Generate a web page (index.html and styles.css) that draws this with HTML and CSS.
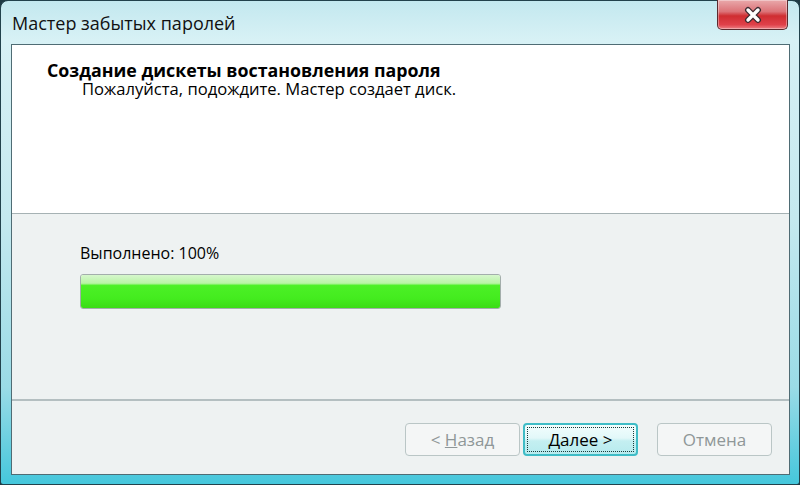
FILE: index.html
```html
<!DOCTYPE html>
<html lang="ru">
<head>
  <meta charset="UTF-8">
  <title>Мастер забытых паролей</title>
  <link rel="stylesheet" href="styles.css">
</head>
<body>
  <div class="window">
    <div class="titlebar">
      <span class="caption">Мастер забытых паролей</span>
      <button class="close" aria-label="Закрыть">
        <svg width="26" height="18" viewBox="0 0 26 18">
          <path d="M8 4 L18 14 M18 4 L8 14" stroke="#3b2a30" stroke-width="6" stroke-linecap="round"/>
          <path d="M8 4 L18 14 M18 4 L8 14" stroke="#fff" stroke-width="3.4" stroke-linecap="round"/>
        </svg>
      </button>
    </div>

    <div class="content">
      <div class="wizard-header">
        <h1>Создание дискеты востановления пароля</h1>
        <p>Пожалуйста, подождите. Мастер создает диск.</p>
      </div>

      <div class="wizard-body">
        <div class="status">Выполнено: 100%</div>
        <div class="progress">
          <div class="progress-fill" style="width: 100%"></div>
        </div>
      </div>

      <div class="wizard-footer">
        <button class="btn" disabled>&lt; <u>Н</u>азад</button>
        <button class="btn default"><span class="focus"><u>Д</u>алее &gt;</span></button>
        <button class="btn cancel" disabled>Отмена</button>
      </div>
    </div>
  </div>
</body>
</html>
```

FILE: styles.css
```css
body {
  margin: 0;
  padding: 0;
  background: #1e3a44;
  font-family: "Open Sans", "Noto Sans", sans-serif;
  color: #000;
}
.window {
  width: 800px;
  height: 485px;
  box-sizing: border-box;
  border: 1px solid #22424c;
  border-radius: 8px 8px 3px 3px;
  background: linear-gradient(to bottom, #c3e8ef 0%, #d7f1f5 8%, #c4e9ef 45%, #9adbe6 80%, #45c7dc 100%);
  display: flex;
  flex-direction: column;
  padding: 0 9px 9px 10px;
}
.titlebar {
  height: 43px;
  display: flex;
  justify-content: space-between;
  align-items: flex-start;
}
.caption {
  font-size: 18px;
  margin-top: 10px;
  margin-left: 1px;
  color: #111;
}
.close {
  width: 71px;
  height: 30px;
  margin-top: -1px;
  margin-right: 2px;
  border: 1px solid #5b2a2e;
  border-top: none;
  border-radius: 0 0 5px 5px;
  background: linear-gradient(to bottom, #e9a9ab 0%, #dc7378 40%, #cf2d31 55%, #e0414a 85%, #ec7f84 100%);
  box-shadow: inset 0 0 0 1px rgba(255, 255, 255, 0.35);
  display: flex;
  align-items: center;
  justify-content: center;
  padding: 0;
}
.content {
  flex: 1;
  border: 1px solid #4f6c74;
  background: #eef2f2;
  display: flex;
  flex-direction: column;
}
.wizard-header {
  height: 169px;
  box-sizing: border-box;
  background: #fff;
  border-bottom: 1px solid #a6b2b4;
  padding: 16px 0 0 35px;
}
.wizard-header h1 {
  margin: 0;
  font-size: 17.8px;
  font-weight: bold;
  line-height: 19px;
}
.wizard-header p {
  margin: 0 0 0 35px;
  font-size: 16.6px;
  line-height: 18px;
}
.wizard-body {
  flex: 1;
  padding: 28px 0 0 68px;
}
.status {
  font-size: 16px;
  line-height: 22px;
  margin-bottom: 10px;
}
.progress {
  width: 419px;
  height: 33px;
  border: 1px solid #a3aeab;
  border-radius: 3px;
  background: #e6e6e6;
  overflow: hidden;
}
.progress-fill {
  height: 100%;
  background: linear-gradient(to bottom, #d6f7cc 0%, #b9f4a6 25%, #4cf026 32%, #44ec1f 70%, #3bdc16 100%);
}
.wizard-footer {
  height: 75px;
  border-top: 2px solid #b4bfc1;
  box-sizing: border-box;
  display: flex;
  justify-content: flex-end;
  align-items: flex-start;
  padding: 22px 17px 0 0;
}
.btn {
  width: 115px;
  height: 33px;
  font-family: "Open Sans", "Noto Sans", sans-serif;
  font-size: 17px;
  border: 1px solid #bac6c6;
  border-radius: 4px;
  background: #f4f6f6;
  color: #8f9798;
  padding: 0;
}
.btn u {
  text-decoration-thickness: 1px;
}
.default {
  margin-left: 3px;
  color: #000;
  border: 2px solid #3fbcc6;
  background: linear-gradient(to bottom, #f2fdfd 0%, #e2f8f9 45%, #c4eff1 55%, #b7ebee 100%);
  padding: 2px;
}
.focus {
  display: flex;
  align-items: center;
  justify-content: center;
  height: 100%;
  box-sizing: border-box;
  border: 1px dotted #1b3a3a;
}
.cancel {
  margin-left: 19px;
}
```
